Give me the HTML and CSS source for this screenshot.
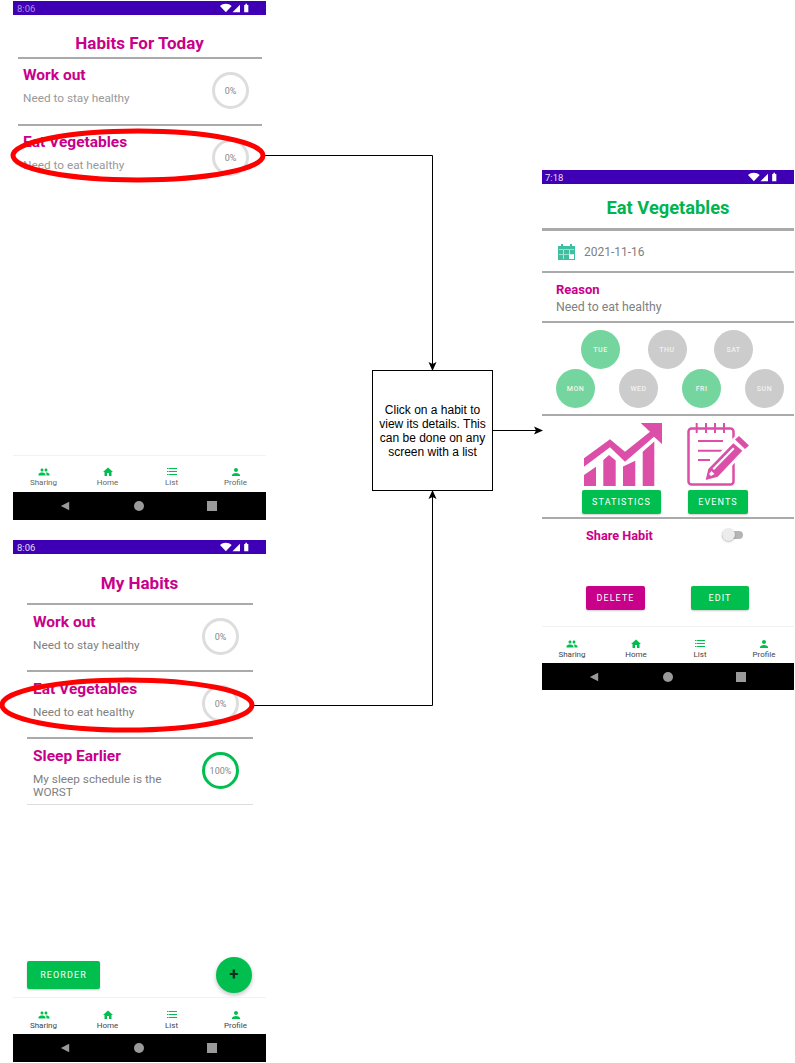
FILE: index.html
```html
<!DOCTYPE html>
<html lang="en">
<head>
    <meta charset="UTF-8">
    <meta name="viewport" content="width=device-width, initial-scale=1.0">
    <title>Habit details flow</title>
    <link rel="stylesheet" href="styles.css">
</head>
<body>
    <svg class="icon-defs" width="0" height="0">
        <symbol id="i-people" viewBox="0 0 24 24"><path d="M16 11c1.66 0 2.99-1.34 2.99-3S17.66 5 16 5c-1.66 0-3 1.34-3 3s1.34 3 3 3zm-8 0c1.66 0 2.99-1.34 2.99-3S9.66 5 8 5C6.34 5 5 6.34 5 8s1.34 3 3 3zm0 2c-2.33 0-7 1.17-7 3.5V19h14v-2.5c0-2.33-4.67-3.5-7-3.5zm8 0c-.29 0-.62.02-.97.05 1.16.84 1.97 1.97 1.97 3.45V19h6v-2.5c0-2.33-4.67-3.5-7-3.5z"/></symbol>
        <symbol id="i-home" viewBox="0 0 24 24"><path d="M10 20v-6h4v6h5v-8h3L12 3 2 12h3v8z"/></symbol>
        <symbol id="i-list" viewBox="0 0 12 12"><path d="M1 2h1.500v1H1zM3 2h8v1H3zM1 5h1.500v1H1zM3 5h8v1H3zM1 8h1.500v1H1zM3 8h8v1H3z"/></symbol>
        <symbol id="i-person" viewBox="0 0 24 24"><path d="M12 12c2.21 0 4-1.79 4-4s-1.79-4-4-4-4 1.79-4 4 1.79 4 4 4zm0 2c-2.67 0-8 1.34-8 4v2h16v-2c0-2.66-5.33-4-8-4z"/></symbol>
        <symbol id="i-status" viewBox="0 0 36 12">
            <path d="M0 3.5C2 1.8 4.500 1 7 1s5 .8 7 2.500L7 11z"/>
            <path d="M15 11 24 2v9z"/>
            <path d="M29 2.500h1.500V1h2v1.500H34V11h-5z"/>
        </symbol>
        <symbol id="i-back" viewBox="0 0 12 12"><path d="M11 1v10L1 6z"/></symbol>
    </svg>

    <!-- today's habits -->
    <section class="phone phone-today">
        <div class="status-bar"><span>8:06</span><svg class="status-icons"><use href="#i-status"/></svg></div>
        <main class="screen">
            <h1 class="screen-title title-today">Habits For Today</h1>
            <div class="habit-list list-wide">
                <div class="habit">
                    <div class="habit-text">
                        <h2>Work out</h2>
                        <p>Need to stay healthy</p>
                    </div>
                    <div class="ring">0%</div>
                </div>
                <div class="habit">
                    <div class="habit-text">
                        <h2>Eat Vegetables</h2>
                        <p>Need to eat healthy</p>
                    </div>
                    <div class="ring">0%</div>
                </div>
            </div>
        </main>
        <nav class="bottom-nav">
            <div class="nav-item"><svg><use href="#i-people"/></svg>Sharing</div>
            <div class="nav-item"><svg><use href="#i-home"/></svg>Home</div>
            <div class="nav-item"><svg><use href="#i-list"/></svg>List</div>
            <div class="nav-item"><svg><use href="#i-person"/></svg>Profile</div>
        </nav>
        <div class="system-bar">
            <svg class="sys-back"><use href="#i-back"/></svg>
            <span class="sys-home"></span>
            <span class="sys-recent"></span>
        </div>
    </section>

    <!-- all habits -->
    <section class="phone phone-habits">
        <div class="status-bar"><span>8:06</span><svg class="status-icons"><use href="#i-status"/></svg></div>
        <main class="screen">
            <h1 class="screen-title title-habits">My Habits</h1>
            <div class="habit-list list-narrow">
                <div class="habit">
                    <div class="habit-text">
                        <h2>Work out</h2>
                        <p>Need to stay healthy</p>
                    </div>
                    <div class="ring">0%</div>
                </div>
                <div class="habit">
                    <div class="habit-text">
                        <h2>Eat Vegetables</h2>
                        <p>Need to eat healthy</p>
                    </div>
                    <div class="ring">0%</div>
                </div>
                <div class="habit habit-last">
                    <div class="habit-text">
                        <h2>Sleep Earlier</h2>
                        <p>My sleep schedule is the WORST</p>
                    </div>
                    <div class="ring ring-done">100%</div>
                </div>
            </div>
            <div class="list-actions">
                <button class="btn btn-reorder" type="button">Reorder</button>
                <button class="fab" type="button">+</button>
            </div>
        </main>
        <nav class="bottom-nav">
            <div class="nav-item"><svg><use href="#i-people"/></svg>Sharing</div>
            <div class="nav-item"><svg><use href="#i-home"/></svg>Home</div>
            <div class="nav-item"><svg><use href="#i-list"/></svg>List</div>
            <div class="nav-item"><svg><use href="#i-person"/></svg>Profile</div>
        </nav>
        <div class="system-bar">
            <svg class="sys-back"><use href="#i-back"/></svg>
            <span class="sys-home"></span>
            <span class="sys-recent"></span>
        </div>
    </section>

    <!-- habit details -->
    <section class="phone phone-detail">
        <div class="status-bar"><span>7:18</span><svg class="status-icons"><use href="#i-status"/></svg></div>
        <main class="screen">
            <h1 class="detail-title">Eat Vegetables</h1>
            <div class="detail-date">
                <svg class="date-icon" viewBox="0 0 17 16">
                    <path fill="#3fbf9f" d="M3 0h2v2h7V0h2v2h3v14H0V2h3z"/>
                    <path fill="#fff" d="M1 5.500h15v.6H1zM5.300 6v9h.6V6zM11 6v4h.6V6zM1 10h15v.6H1z"/>
                    <path fill="#fff" d="M11 10.500h5V15h-5z"/>
                    <path fill="#3fbf9f" d="M10.500 15h6.500v1h-6.500z"/>
                </svg>
                <span>2021-11-16</span>
            </div>
            <div class="detail-reason">
                <h2>Reason</h2>
                <p>Need to eat healthy</p>
            </div>
            <div class="days">
                <div class="days-row days-top">
                    <span class="day day-on">TUE</span>
                    <span class="day">THU</span>
                    <span class="day">SAT</span>
                </div>
                <div class="days-row days-bottom">
                    <span class="day day-on">MON</span>
                    <span class="day">WED</span>
                    <span class="day day-on">FRI</span>
                    <span class="day">SUN</span>
                </div>
            </div>
            <div class="detail-tools">
                <div class="tool tool-stats">
                    <svg class="tool-icon" width="79" height="63" viewBox="0 0 79 63">
                        <path fill="#dc4fa8" d="M0 35.300 26 16.300 41 28.700 66 8.700 56.700 0H78V21L70 13.700 41 38.700 26 24.300 0 43.700z"/>
                        <path fill="#dc4fa8" d="M0 52 12 43.700V63H0zM19.300 37 25 32 31.700 37.500V63H19.300zM39 43.500 51.300 37.700V63H39zM58.700 28.700 70.300 18.500V63H58.700z"/>
                    </svg>
                    <button class="btn btn-stats" type="button">Statistics</button>
                </div>
                <div class="tool tool-events">
                    <svg class="tool-icon" width="64" height="63" viewBox="0 0 64 63">
                        <rect x="1.500" y="5.500" width="45" height="56" rx="3" fill="none" stroke="#dc4fa8" stroke-width="2.500"/>
                        <path stroke="#dc4fa8" stroke-width="2" d="M9.700 0v10M19 0v10M28 0v10M37 0v10M11 18h25M11 27.700h25M11 37h12"/>
                        <path fill="#fff" d="M16 60 20 44 45 16 52 10 64 22 33 56z"/>
                        <path fill="#dc4fa8" d="M18.700 57 21.300 46 46.300 20.300 55.300 27.700 30.700 53.700zM48 16.500 52 13 62 22.500 58 26z"/>
                        <path fill="#fff" d="M25.500 45.500 46 24.500 47.500 26 27 47zM22 51 24.500 48 27.500 51 24 53z"/>
                    </svg>
                    <button class="btn btn-events" type="button">Events</button>
                </div>
            </div>
            <div class="detail-share">
                <span class="share-label">Share Habit</span>
                <span class="switch"><span class="switch-thumb"></span></span>
            </div>
            <div class="detail-actions">
                <button class="btn btn-delete" type="button">Delete</button>
                <button class="btn btn-edit" type="button">Edit</button>
            </div>
        </main>
        <nav class="bottom-nav">
            <div class="nav-item"><svg><use href="#i-people"/></svg>Sharing</div>
            <div class="nav-item"><svg><use href="#i-home"/></svg>Home</div>
            <div class="nav-item"><svg><use href="#i-list"/></svg>List</div>
            <div class="nav-item"><svg><use href="#i-person"/></svg>Profile</div>
        </nav>
        <div class="system-bar">
            <svg class="sys-back"><use href="#i-back"/></svg>
            <span class="sys-home"></span>
            <span class="sys-recent"></span>
        </div>
    </section>

    <div class="note">Click on a habit to view its details. This can be done on any screen with a list</div>

    <!-- connectors and highlight ellipses -->
    <svg class="connectors" width="795" height="1063" viewBox="0 0 795 1063">
        <g fill="none" stroke="#000" stroke-width="1">
            <path d="M264 155.500H432.500V364"/>
            <path d="M254 705.500H432.500V497"/>
            <path d="M493 430.500H536"/>
        </g>
        <path d="M432.500 371 428.500 362 432.500 364 436.500 362z"/>
        <path d="M432.500 490 428.500 499 432.500 497 436.500 499z"/>
        <path d="M543 430.500 534 426.500 536 430.500 534 434.500z"/>
        <g fill="none" stroke="#f00" stroke-width="5">
            <ellipse cx="138" cy="155.500" rx="125" ry="24.500"/>
            <ellipse cx="127" cy="705" rx="125" ry="25"/>
        </g>
    </svg>
</body>
</html>
```

FILE: styles.css
```css
html, body {
    margin: 0;
    padding: 0;
    background: #fff;
    font-family: Roboto, "Liberation Sans", sans-serif;
}

body {
    position: relative;
    width: 795px;
    height: 1063px;
    overflow: hidden;
}

h1, h2, p {
    margin: 0;
}

.icon-defs {
    position: absolute;
}

/* The three phones sit on a free canvas */
.phone {
    position: absolute;
    width: 253px;
    display: flex;
    flex-direction: column;
    background: #fff;
}

.phone-today {
    left: 13px;
    top: 1px;
    height: 519px;
}

.phone-habits {
    left: 13px;
    top: 540px;
    height: 522px;
}

.phone-detail {
    left: 542px;
    top: 170px;
    width: 252px;
    height: 520px;
}

.status-bar {
    flex: none;
    height: 14px;
    padding: 0 15px 0 4px;
    display: flex;
    align-items: center;
    justify-content: space-between;
    background: #3f00b5;
    color: #e4dcf4;
    font-size: 9.500px;
}

.phone-today .status-bar {
    color: #a893dc;
}

.phone-detail .status-bar {
    padding-left: 3px;
}

.status-icons {
    width: 32px;
    height: 10px;
    fill: #fff;
}

.screen {
    flex: 1;
    display: flex;
    flex-direction: column;
    min-height: 0;
}

/* Habit lists */
.screen-title {
    text-align: center;
    color: #c9008a;
    font-size: 17px;
    font-weight: 700;
    line-height: 22px;
}

.title-today {
    padding: 17px 0 3px;
}

.title-habits {
    padding: 18px 0 9px;
}

.habit-list {
    display: flex;
    flex-direction: column;
}

.list-wide {
    margin: 0 4px 0 5px;
}

.list-narrow {
    margin: 0 13px 0 14px;
}

.habit {
    height: 63px;
    border-top: 2px solid #aaa;
    display: flex;
    justify-content: space-between;
    align-items: center;
    padding: 0 4px 2px 5px;
}

.list-narrow .habit {
    padding: 0 14px 2px 6px;
}

.list-narrow .habit-last {
    border-bottom: 1px solid #ddd;
}

.habit-text {
    width: 150px;
    align-self: flex-start;
    padding-top: 7px;
}

.list-narrow .habit-text {
    padding-top: 8px;
}

.habit-text h2 {
    color: #c9008a;
    font-size: 15.500px;
    font-weight: 700;
    line-height: 18px;
    margin-bottom: 8px;
}

.habit-text p {
    color: #808080;
    font-size: 11.800px;
    line-height: 13px;
}

.list-wide .habit-text p {
    color: #999;
}

.ring {
    width: 31px;
    height: 31px;
    margin-right: 9px;
    border: 3px solid #ddd;
    border-radius: 50%;
    display: flex;
    align-items: center;
    justify-content: center;
    color: #888;
    font-size: 9px;
}

.list-narrow .ring {
    margin-right: 0;
}

.ring-done {
    border-color: #00bf4f;
}

.list-actions {
    margin-top: auto;
    padding: 0 14px 4px 14px;
    display: flex;
    justify-content: space-between;
    align-items: center;
}

/* Buttons */
.btn {
    border: none;
    border-radius: 2px;
    padding: 0;
    height: 24px;
    color: #fff;
    background: #00bf4f;
    font-family: inherit;
    font-size: 9px;
    font-weight: 400;
    letter-spacing: 1.100px;
    text-transform: uppercase;
    box-shadow: 0 1px 2px rgba(0, 0, 0, 0.2);
}

.btn-reorder {
    width: 73px;
    height: 28px;
}

.fab {
    width: 36px;
    height: 36px;
    padding: 0 0 2px;
    border: none;
    border-radius: 50%;
    background: #00bf4f;
    color: #12301f;
    font-family: inherit;
    font-size: 17px;
    font-weight: 700;
    box-shadow: 0 2px 4px rgba(0, 0, 0, 0.25);
}

/* Bottom navigation and system bar */
.bottom-nav {
    flex: none;
    height: 36px;
    border-top: 1px solid #f2f2f2;
    display: grid;
    grid-template-columns: repeat(4, 64px);
    justify-content: center;
}

.nav-item {
    padding-top: 11px;
    display: flex;
    flex-direction: column;
    align-items: center;
    color: #444;
    font-size: 8px;
    line-height: 9px;
}

.phone-today .nav-item {
    padding-top: 10px;
    color: #666;
}

.nav-item svg {
    width: 12px;
    height: 12px;
    fill: #00bf4f;
}

.system-bar {
    flex: none;
    height: 28px;
    background: #000;
    display: grid;
    grid-template-columns: 31px 12px 62px 10px 63px 10px;
    grid-template-rows: 10px;
    align-items: center;
    align-content: center;
    padding-left: 16px;
}

.phone-detail .system-bar {
    height: 27px;
}

.sys-back {
    grid-column: 2;
    width: 10px;
    height: 10px;
    fill: #9a9a9a;
}

.sys-home {
    grid-column: 4;
    width: 10px;
    height: 10px;
    border-radius: 50%;
    background: #9a9a9a;
}

.sys-recent {
    grid-column: 6;
    width: 10px;
    height: 10px;
    background: #9a9a9a;
}

/* Detail screen */
.detail-title {
    height: 47px;
    box-sizing: border-box;
    padding-top: 12px;
    text-align: center;
    color: #00b44f;
    font-size: 18.300px;
    font-weight: 700;
    line-height: 23px;
    border-bottom: 3px solid #aaa;
}

.detail-date {
    height: 38px;
    padding: 2px 0 0 16px;
    display: flex;
    align-items: center;
    gap: 9px;
    color: #808080;
    font-size: 12px;
    border-bottom: 2px solid #aaa;
}

.date-icon {
    width: 17px;
    height: 16px;
}

.detail-reason {
    height: 50px;
    box-sizing: border-box;
    padding: 9px 0 0 14px;
    border-bottom: 2px solid #aaa;
}

.detail-reason h2 {
    color: #c9008a;
    font-size: 13px;
    font-weight: 700;
    line-height: 15px;
}

.detail-reason p {
    margin-top: 3px;
    color: #808080;
    font-size: 12.300px;
    line-height: 15px;
}

.days {
    height: 93px;
    box-sizing: border-box;
    padding-top: 7px;
    border-bottom: 2px solid #aaa;
}

.days-row {
    display: flex;
}

.days-top {
    padding-left: 39px;
    gap: 27.500px;
}

.days-bottom {
    padding-left: 14px;
    gap: 24px;
}

.day {
    width: 39px;
    height: 39px;
    border-radius: 50%;
    background: #ccc;
    display: flex;
    align-items: center;
    justify-content: center;
    color: #f2f2f2;
    font-size: 7px;
    font-weight: 500;
    letter-spacing: 0.500px;
}

.day-on {
    background: #74d69e;
}

.detail-tools {
    height: 103px;
    box-sizing: border-box;
    padding: 7px 0 0 40px;
    display: flex;
    gap: 25px;
    border-bottom: 2px solid #aaa;
}

.tool {
    display: flex;
    flex-direction: column;
    align-items: flex-start;
    gap: 4px;
}

.tool-icon {
    display: block;
    margin-left: 2px;
}

.tool-events .tool-icon {
    margin-left: -1px;
}

.btn-stats {
    width: 79px;
}

.btn-events {
    width: 60px;
}

.detail-share {
    height: 32px;
    padding: 0 0 2px 44px;
    display: flex;
    align-items: center;
}

.share-label {
    width: 136px;
    color: #c9008a;
    font-size: 12.700px;
    font-weight: 700;
}

.switch {
    position: relative;
    width: 21px;
    height: 8px;
    border-radius: 4px;
    background: #b5b5b5;
}

.switch-thumb {
    position: absolute;
    left: 0;
    top: -3px;
    width: 13px;
    height: 13px;
    border-radius: 50%;
    background: #ececec;
    box-shadow: 0 1px 2px rgba(0, 0, 0, 0.25);
}

.detail-actions {
    padding: 33px 0 0 44px;
    display: flex;
    gap: 46px;
}

.btn-delete {
    width: 59px;
    background: #c9008a;
}

.btn-edit {
    width: 58px;
}

/* Diagram parts */
.note {
    position: absolute;
    left: 372px;
    top: 370px;
    width: 121px;
    height: 121px;
    box-sizing: border-box;
    padding: 0 5px;
    border: 1px solid #000;
    background: #fff;
    display: flex;
    align-items: center;
    text-align: center;
    color: #000;
    font-family: "Liberation Sans", Arial, sans-serif;
    font-size: 12px;
    line-height: 14px;
}

.connectors {
    position: absolute;
    left: 0;
    top: 0;
    pointer-events: none;
}
```
